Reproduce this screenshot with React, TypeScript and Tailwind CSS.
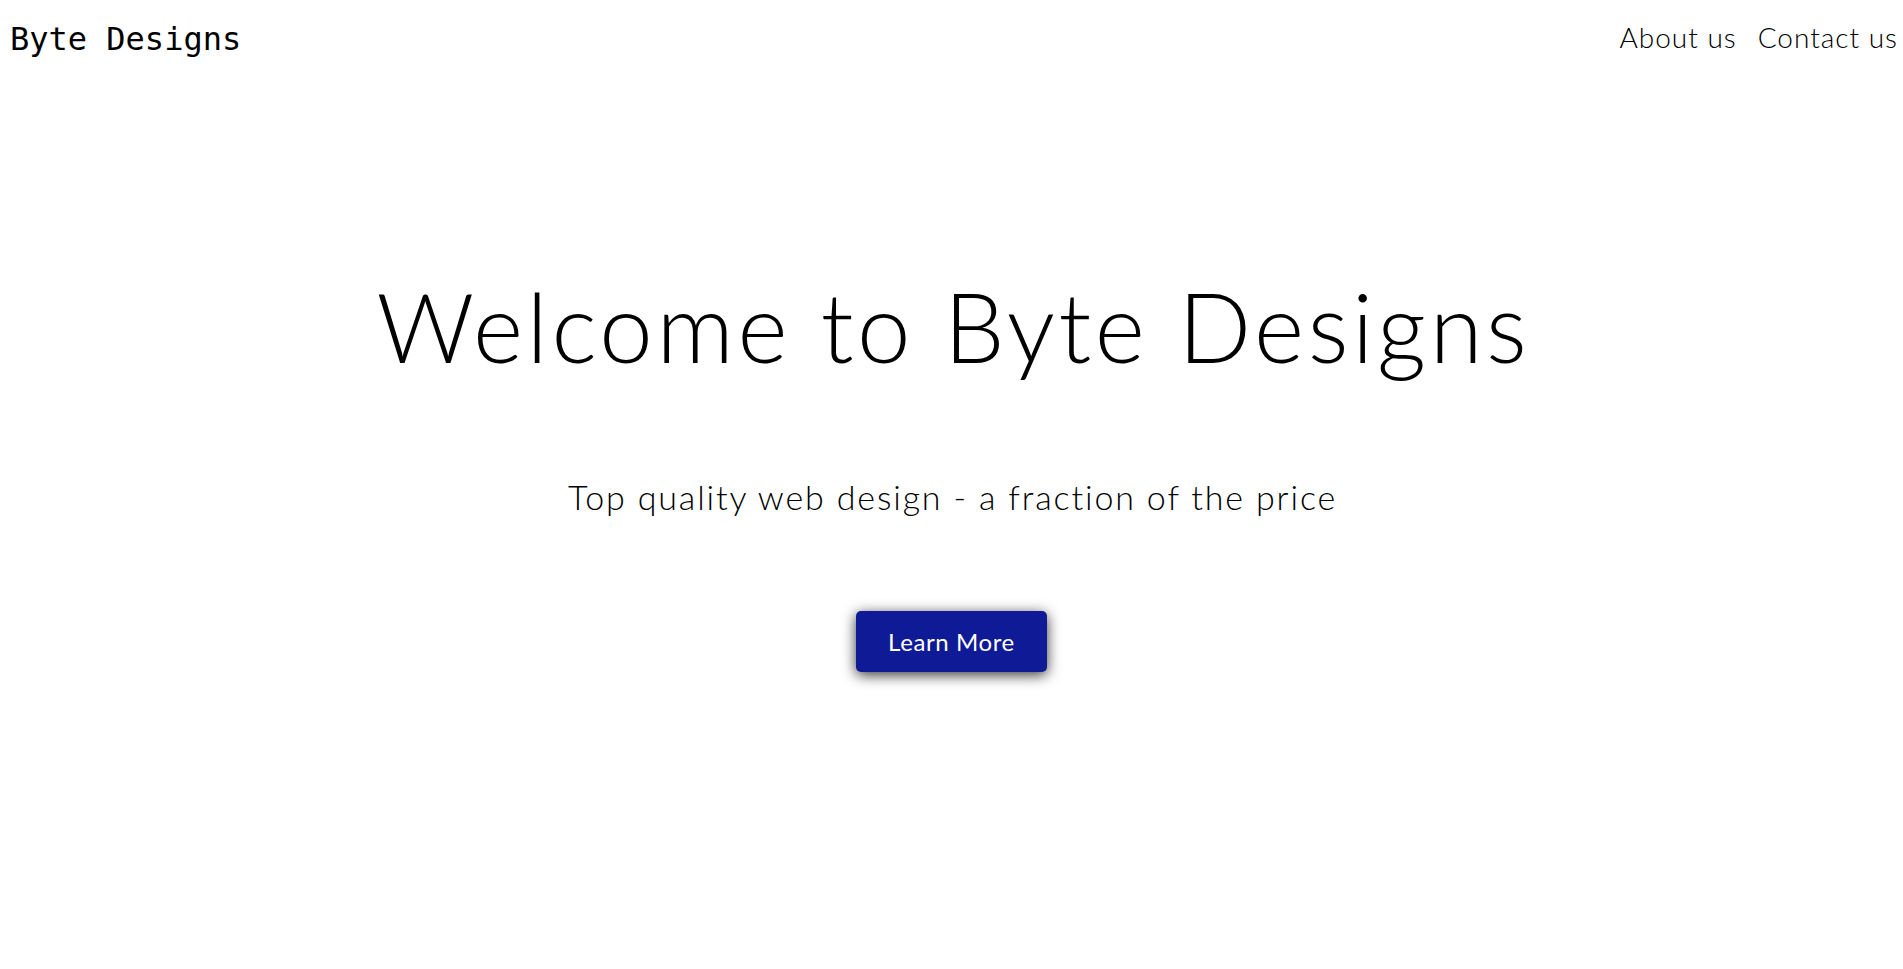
import React from "react";

export default function App() {
  return (
    <div className="min-h-screen bg-white text-black">
      <header className="flex items-start justify-between pl-[10px] pr-[5px] pt-[19px]">
        <div className="font-['DejaVu_Sans_Mono',monospace] text-[32px] leading-[40px] text-black">
          Byte Designs
        </div>
        <nav className="flex gap-[21px] font-['Lato',sans-serif] font-light text-[28px] leading-[36px] tracking-[1px] text-black">
          <a href="#">About us</a>
          <a href="#">Contact us</a>
        </nav>
      </header>
      <main className="flex flex-col items-center font-['Lato',sans-serif] font-light">
        <h1 className="mt-[212px] pl-[4px] text-[96px] leading-[110px] tracking-[3.6px] text-black">
          Welcome to Byte Designs
        </h1>
        <p className="mt-[95px] pl-[2px] text-[34px] leading-[42px] tracking-[1.85px] text-black">
          Top quality web design - a fraction of the price
        </p>
        <button className="mt-[93px] flex h-[61px] w-[191px] items-center justify-center rounded-[5px] bg-[#0f1b96] text-[24px] font-normal tracking-[0.6px] text-white shadow-[0_3px_14px_rgba(0,0,0,0.8)]">
          Learn More
        </button>
      </main>
    </div>
  );
}
